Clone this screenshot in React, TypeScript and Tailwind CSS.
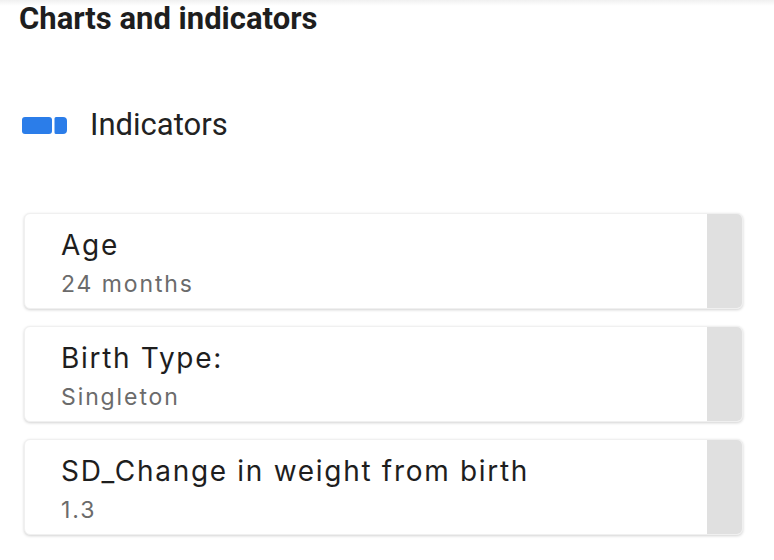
const items = [
  { label: 'Age', value: '24 months' },
  { label: 'Birth Type:', value: 'Singleton' },
  { label: 'SD_Change in weight from birth', value: '1.3' },
];

function IndicatorIcon() {
  return (
    <svg width="46" height="17" viewBox="0 0 46 17" className="shrink-0">
      <rect x="0" y="0" width="30" height="17" rx="3" fill="#2b7de9" />
      <path d="M34 0h7a4 4 0 0 1 4 4v9a4 4 0 0 1-4 4h-7a1.5 1.5 0 0 1-1.5-1.5v-14A1.5 1.5 0 0 1 34 0z" fill="#2b7de9" />
    </svg>
  );
}

export default function App() {
  return (
    <div className="w-[774px] h-[560px] overflow-hidden bg-white font-['Roboto',sans-serif] text-[#1c1c1c]">
      <div className="bg-gradient-to-b from-[#f0f0f0] to-white h-[6px]" />
      <h1 className="-mt-[6px] pl-[19px] text-[31px] leading-[38px] font-bold text-[#1e1e1e]">
        Charts and indicators
      </h1>

      <div className="flex items-center gap-[22px] pl-[22px] mt-[68px]">
        <IndicatorIcon />
        <span className="text-[31px] leading-[38px] text-[#222]">Indicators</span>
      </div>

      <div className="flex flex-col gap-[17px] mt-[69px] pl-[24px] pr-[31px] font-['Inter',sans-serif]">
        {items.map((item, i) => (
          <div
            key={i}
            className="flex h-[96px] rounded-[6px] bg-white overflow-hidden shadow-[0_1px_3px_rgba(0,0,0,0.18)] border border-[#f0f0f0]"
          >
            <div className="flex-1 pl-[36px] pt-[14px]">
              <div className="text-[28px] leading-[34px] tracking-[1.7px] text-[#1e1e1e]">{item.label}</div>
              <div className="text-[23px] leading-[30px] tracking-[1.9px] mt-[7px] text-[#6b6b6b]">{item.value}</div>
            </div>
            <div className="w-[35px] bg-[#e0e0e0]" />
          </div>
        ))}
      </div>
    </div>
  );
}
